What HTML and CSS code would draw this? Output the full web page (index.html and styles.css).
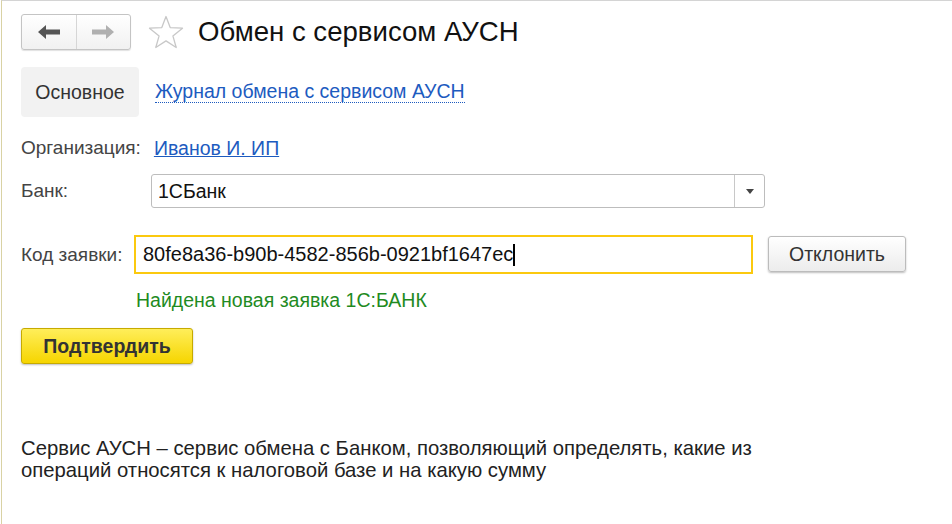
FILE: index.html
```html
<!DOCTYPE html>
<html lang="ru">
<head>
	<meta charset="UTF-8">
	<title>Обмен с сервисом АУСН</title>
	<link rel="stylesheet" href="styles.css">
</head>
<body>
	<div class="page">
		<div class="header">
			<div class="nav">
				<a href="javascript:;" class="nav-btn">
					<svg width="22" height="14" viewBox="0 0 22 14"><path d="M0 7 L8 0 L8 4.5 L22 4.5 L22 9.5 L8 9.5 L8 14 Z" fill="#555"/></svg>
				</a>
				<a href="javascript:;" class="nav-btn">
					<svg width="22" height="14" viewBox="0 0 22 14"><path d="M22 7 L14 0 L14 4.5 L0 4.5 L0 9.5 L14 9.5 L14 14 Z" fill="#b0b0b0"/></svg>
				</a>
			</div>
			<svg class="star" width="36" height="34" viewBox="0 0 36 34"><path d="M18 1.5 L22.2 12.6 L34.5 13.2 L24.9 20.9 L28.2 32.5 L18 25.9 L7.8 32.5 L11.1 20.9 L1.5 13.2 L13.8 12.6 Z" fill="none" stroke="#c8c8c8" stroke-width="1.3" stroke-linejoin="round"/></svg>
			<h1 class="title">Обмен с сервисом АУСН</h1>
		</div>

		<div class="tabs">
			<span class="tab active">Основное</span>
			<a href="javascript:;" class="tab-link">Журнал обмена с сервисом АУСН</a>
		</div>

		<div class="row row-org">
			<span class="label">Организация:</span>
			<a href="javascript:;" class="link">Иванов И. ИП</a>
		</div>

		<div class="row row-bank">
			<span class="label label-bank">Банк:</span>
			<div class="select">
				<span class="select-value">1СБанк</span>
				<span class="select-btn"><i class="caret"></i></span>
			</div>
		</div>

		<div class="row row-code">
			<span class="label label-code">Код заявки:</span>
			<div class="input">80fe8a36-b90b-4582-856b-0921bf1647ec<i class="cursor"></i></div>
			<a href="javascript:;" class="btn">Отклонить</a>
		</div>

		<div class="found">Найдена новая заявка 1С:БАНК</div>

		<div class="actions">
			<a href="javascript:;" class="btn btn-primary">Подтвердить</a>
		</div>

		<p class="note">Сервис АУСН – сервис обмена с Банком, позволяющий определять, какие из<br>операций относятся к налоговой базе и на какую сумму</p>
	</div>
</body>
</html>
```

FILE: styles.css
```css
* {padding: 0; margin: 0; box-sizing: border-box;}
body {
	background: #fff;
	font-family: "Liberation Sans", Arial, sans-serif;
	font-size: 19.5px;
	color: #333;
}
a {text-decoration: none;}
.page {
	height: 524px;
	margin-left: 1px;
	padding: 13px 0 0 19px;
	border-top: 1px solid #d4d4d4;
	border-left: 1px solid #d9d2a4;
}
.header {
	display: flex;
	align-items: center;
	height: 36px;
}
.nav {
	display: flex;
	width: 110px;
	height: 36px;
	border: 1px solid #c4c4c4;
	border-radius: 3px;
	background: linear-gradient(#fff, #f1f1f1);
	box-shadow: 0 1px 1px rgba(0,0,0,.12);
}
.nav-btn {
	flex: 1;
	display: flex;
	align-items: center;
	justify-content: center;
}
.nav-btn + .nav-btn {
	border-left: 1px solid #d6d6d6;
}
.star {
	margin-left: 17px;
}
.title {
	margin-left: 14px;
	font-size: 27.6px;
	font-weight: normal;
	color: #111;
}
.tabs {
	display: flex;
	align-items: center;
	margin-top: 17px;
	height: 50px;
}
.tab {
	display: flex;
	align-items: center;
	justify-content: center;
	width: 118px;
	height: 50px;
	border-radius: 4px;
	color: #333;
}
.tab.active {
	background: #f2f2f2;
}
.tab-link {
	margin-left: 16px;
	color: #1d5bbf;
	border-bottom: 1px dotted #1d5bbf;
	line-height: 21px;
}
.row {
	display: flex;
	align-items: center;
}
.label {
	font-size: 19px;
	color: #444;
	margin-right: 13px;
}
.row-org {
	margin-top: 21px;
	height: 20px;
}
.link {
	color: #1d5bbf;
	text-decoration: underline;
}
.row-bank {
	margin-top: 16px;
	height: 34px;
}
.label-bank {
	width: 130px;
	margin-right: 0;
}
.select {
	display: flex;
	width: 614px;
	height: 34px;
	border: 1px solid #bdbdbd;
	border-radius: 3px;
}
.select-value {
	flex: 1;
	padding-left: 6px;
	line-height: 32px;
	color: #111;
}
.select-btn {
	width: 30px;
	display: flex;
	align-items: center;
	justify-content: center;
	border-left: 1px solid #c8c8c8;
}
.caret {
	width: 0;
	height: 0;
	border-left: 4px solid transparent;
	border-right: 4px solid transparent;
	border-top: 5px solid #444;
}
.row-code {
	margin-top: 27px;
	height: 38px;
	align-items: flex-start;
}
.label-code {
	width: 113px;
	margin-right: 0;
	line-height: 40px;
}
.input {
	display: flex;
	align-items: center;
	width: 619px;
	height: 39px;
	padding-left: 7px;
	border: 2px solid #fbc90f;
	font-size: 20px;
	color: #111;
}
.cursor {
	display: inline-block;
	width: 2px;
	height: 22px;
	background: #000;
}
.btn {
	display: inline-flex;
	align-items: center;
	justify-content: center;
	height: 36px;
	border: 1px solid #bcbcbc;
	border-radius: 3px;
	background: linear-gradient(#fff, #ececec);
	box-shadow: 0 1px 2px rgba(0,0,0,.25);
	color: #333;
}
.row-code .btn {
	margin-left: 15px;
	width: 138px;
	margin-top: 1px;
}
.found {
	margin-top: 17px;
	padding-left: 115px;
	color: #1f8b1f;
	line-height: 20px;
}
.actions {
	margin-top: 18px;
}
.btn-primary {
	width: 172px;
	height: 36px;
	border-color: #c6aa00;
	background: linear-gradient(#ffee5a, #f6d500);
	font-weight: bold;
	color: #333;
}
.note {
	margin-top: 73px;
	line-height: 22px;
	font-size: 20.3px;
	color: #222;
}
```
